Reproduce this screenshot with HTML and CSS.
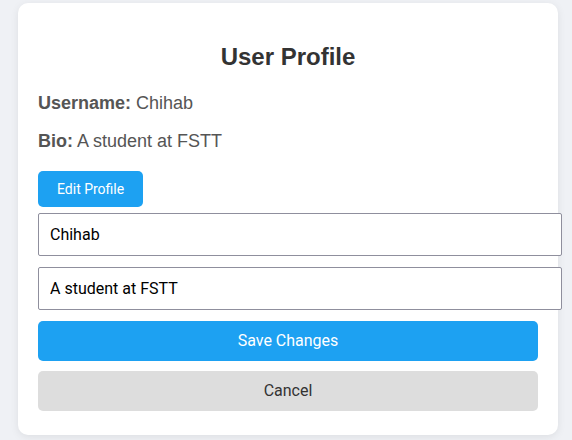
FILE: index.html
```html
<!DOCTYPE html>
<html>
<head>
<meta charset="utf-8">
<link rel="stylesheet" href="styles.css">
</head>
<body>
<div class="card">
  <h2 class="title">User Profile</h2>
  <p class="info"><strong>Username:</strong> Chihab</p>
  <p class="info"><strong>Bio:</strong> A student at FSTT</p>
  <button class="btn btn-edit">Edit Profile</button>
  <input class="field field-first" type="text" value="Chihab">
  <input class="field" type="text" value="A student at FSTT">
  <button class="btn btn-block btn-save">Save Changes</button>
  <button class="btn btn-block btn-cancel">Cancel</button>
</div>
</body>
</html>
```
FILE: styles.css
```css
html, body {
  margin: 0;
  background: #eff1f5;
  height: 100%;
  overflow: hidden;
}
body {
  font-family: "Liberation Sans", Arial, sans-serif;
}
.card {
  width: 500px;
  margin: 3px 0 0 18px;
  padding: 20px 20px 24px;
  background: #fff;
  border-radius: 10px;
  box-shadow: 0 2px 8px rgba(0, 0, 0, 0.08);
}
.title {
  margin: 20px 0 22px;
  font-size: 24px;
  line-height: 28px;
  text-align: center;
  color: #333;
}
.info {
  margin: 0;
  font-size: 18px;
  line-height: 21px;
  color: #555;
}
.info + .info {
  margin-top: 17px;
}
.btn {
  display: block;
  border: none;
  border-radius: 5px;
  font-family: Roboto, sans-serif;
  cursor: pointer;
}
.btn-edit {
  margin-top: 19px;
  padding: 10px 19px;
  font-size: 14px;
  line-height: 16px;
  background: #1da1f2;
  color: #fff;
}
.field {
  display: block;
  width: 100%;
  margin: 6px 0 0;
  padding: 10px 11px;
  border: 1px solid #8f8f9d;
  border-radius: 2px;
  font-family: Roboto, sans-serif;
  font-size: 16px;
  line-height: 21px;
  color: #000;
  background: #fff;
}
.field + .field {
  margin-top: 11px;
}
.btn-block {
  width: 100%;
  margin-top: 10px;
  padding: 10px 0;
  font-size: 16px;
  line-height: 20px;
}
.field + .btn-block {
  margin-top: 11px;
}
.btn-save {
  background: #1da1f2;
  color: #fff;
}
.btn-cancel {
  background: #ddd;
  color: #333;
}
```
